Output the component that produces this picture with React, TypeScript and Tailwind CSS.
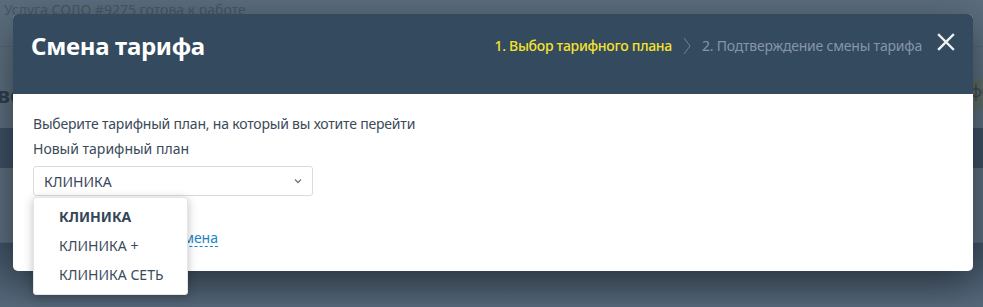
import React from "react";

export default function App() {
  const font = { fontFamily: '"Noto Sans", "Open Sans", sans-serif' };
  return (
    <div className="relative w-[983px] h-[307px] overflow-hidden bg-[#5b6e7e]" style={font}>
      {/* background page (dimmed) */}
      <div className="flex flex-col w-full h-full">
        <div className="h-[47px] border-b border-[#526575] px-[4px] text-[14px] leading-[20px] text-[#46586a]">
          Услуга СОЛО #9275 готова к работе
        </div>
        <div className="h-[81px] flex items-start justify-between">
          <div className="pt-[31px] text-[22px] font-bold text-[#2f3f4e] -ml-[3px]">во</div>
          <div className="mt-[32px] h-[30px] w-[14px] bg-[#5e6d68] text-[16px] text-[#3a4a55] pl-[1px]">фо</div>
        </div>
        <div className="h-[40px] bg-[#3d5064]" />
        <div className="h-[75px] border-b border-[#526575]" />
        <div className="flex-1 bg-gradient-to-b from-[#3f5266] to-[#56697b]" />
      </div>

      {/* modal */}
      <div className="absolute left-[13px] top-[14px] w-[960px] h-[257px] rounded-[5px] overflow-hidden bg-white shadow-[0_12px_40px_rgba(0,0,0,0.45)]">
        <div className="h-[80px] bg-[#344a5f] flex items-start pl-[18px] pr-[18px]">
          <div className="mt-[16px] text-[24px] leading-[32px] font-bold text-white tracking-[-0.3px]">Смена тарифа</div>
          <div className="ml-auto mt-[22px] flex items-center text-[14px] leading-[20px] tracking-[-0.3px]">
            <span className="text-[#f4e32c] font-medium">1. Выбор тарифного плана</span>
            <svg className="mx-[11px]" width="8" height="18" viewBox="0 0 8 18" fill="none">
              <path d="M1 1 L7 9 L1 17" stroke="#6f8296" strokeWidth="1" />
            </svg>
            <span className="text-[#8596aa] tracking-[-0.2px]">2. Подтверждение смены тарифа</span>
          </div>
          <svg className="ml-[15px] mt-[19px]" width="18" height="18" viewBox="0 0 18 18">
            <path d="M2 2 L16 16 M16 2 L2 16" stroke="#f0f2f4" strokeWidth="2.4" strokeLinecap="square" />
          </svg>
        </div>
        <div className="pl-[20px] pt-[20px] text-[#3b4a59]">
          <div className="text-[14px] leading-[20px] tracking-[-0.2px]">Выберите тарифный план, на который вы хотите перейти</div>
          <div className="text-[14px] leading-[20px] mt-[5px]">Новый тарифный план</div>
          <div className="mt-[7px] w-[280px] h-[30px] border border-[#d9dcdf] rounded-[3px] flex items-center pl-[10px] pr-[10px] text-[14px] text-[#36465a]">
            <span>КЛИНИКА</span>
            <svg className="ml-auto" width="8" height="6" viewBox="0 0 8 6" fill="none">
              <path d="M1 1.5 L4 4.5 L7 1.5" stroke="#6b7785" strokeWidth="1.3" />
            </svg>
          </div>
          <div className="mt-[27px] flex items-center w-[185px]">
            <div className="w-[2px] h-[28px] bg-[#b9bec4] mt-[2px]" />
            <span className="ml-auto text-[14px] text-[#1d84c6] border-b border-dashed border-[#1d84c6] leading-[17px]">
              Смена
            </span>
          </div>
        </div>
      </div>

      {/* dropdown */}
      <div className="absolute left-[33px] top-[197px] w-[155px] h-[98px] bg-white rounded-[3px] border border-[#e3e5e8] shadow-[0_2px_10px_rgba(0,0,0,0.25)] flex flex-col pt-[4px] text-[14px] text-[#3b4a5c]">
        <div className="h-[29px] flex items-center pl-[25px] font-bold text-[#344558]">КЛИНИКА</div>
        <div className="h-[29px] flex items-center pl-[25px]">КЛИНИКА +</div>
        <div className="h-[29px] flex items-center pl-[25px]">КЛИНИКА СЕТЬ</div>
      </div>
    </div>
  );
}
